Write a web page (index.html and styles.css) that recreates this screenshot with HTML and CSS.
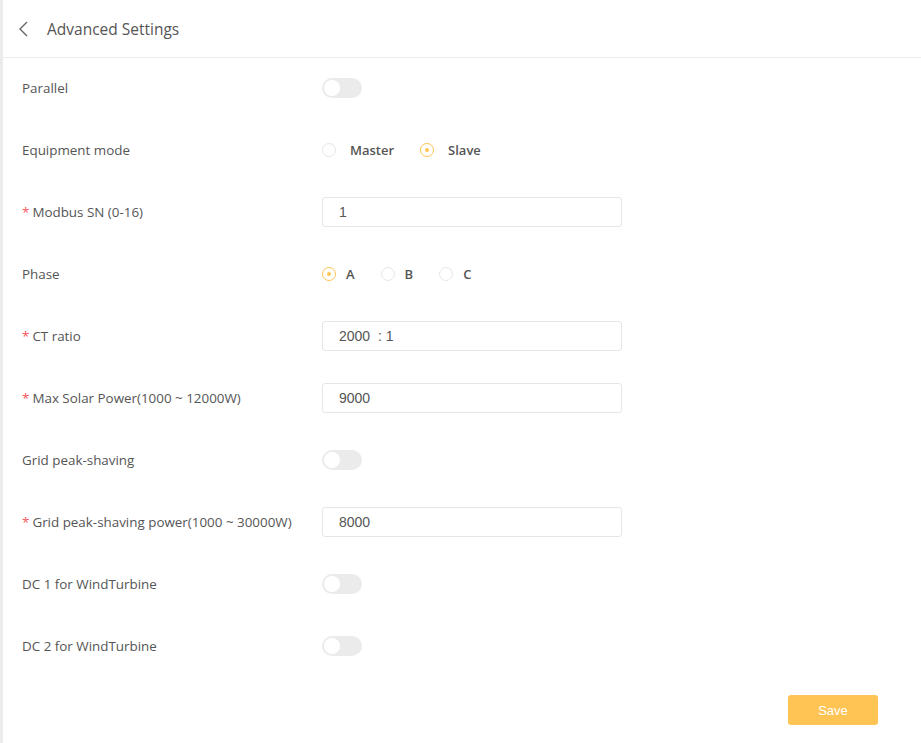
FILE: index.html
```html
<!DOCTYPE html>
<html lang="en">
<head>
    <meta charset="UTF-8">
    <meta name="viewport" content="width=device-width, initial-scale=1.0">
    <title>Advanced Settings</title>
    <link rel="stylesheet" href="styles.css">
</head>
<body>
    <div class="page">
        <div class="header">
            <svg class="back" width="12" height="16" viewBox="0 0 12 16">
                <path d="M9 1 L2 8 L9 15" fill="none" stroke="#666" stroke-width="1.4"/>
            </svg>
            <span class="title">Advanced Settings</span>
        </div>

        <div class="form">
            <div class="row">
                <label>Parallel</label>
                <span class="switch"></span>
            </div>
            <div class="row">
                <label>Equipment mode</label>
                <div class="radios">
                    <span class="radio"><i></i>Master</span>
                    <span class="radio checked"><i></i>Slave</span>
                </div>
            </div>
            <div class="row">
                <label><em>*</em>Modbus SN (0-16)</label>
                <div class="input">1</div>
            </div>
            <div class="row">
                <label>Phase</label>
                <div class="radios small">
                    <span class="radio checked"><i></i>A</span>
                    <span class="radio"><i></i>B</span>
                    <span class="radio"><i></i>C</span>
                </div>
            </div>
            <div class="row">
                <label><em>*</em>CT ratio</label>
                <div class="input">2000 &nbsp;: 1</div>
            </div>
            <div class="row">
                <label><em>*</em>Max Solar Power(1000 ~ 12000W)</label>
                <div class="input">9000</div>
            </div>
            <div class="row">
                <label>Grid peak-shaving</label>
                <span class="switch"></span>
            </div>
            <div class="row">
                <label><em>*</em>Grid peak-shaving power(1000 ~ 30000W)</label>
                <div class="input">8000</div>
            </div>
            <div class="row">
                <label>DC 1 for WindTurbine</label>
                <span class="switch"></span>
            </div>
            <div class="row">
                <label>DC 2 for WindTurbine</label>
                <span class="switch"></span>
            </div>
        </div>

        <div class="footer">
            <button class="save">Save</button>
        </div>
    </div>
</body>
</html>
```

FILE: styles.css
```css
body {
    margin: 0;
    font-family: "Open Sans", "Noto Sans", sans-serif;
    color: #555;
    background-color: white;
}
.page {
    border-left: 3px solid #ebebeb;
    min-height: 743px;
    box-sizing: border-box;
}
.header {
    height: 57px;
    border-bottom: 1px solid #ebebeb;
    display: flex;
    align-items: center;
    padding-left: 15px;
}
.back {
    margin-right: 17px;
}
.title {
    font-size: 15.5px;
    color: #555;
}
.form {
    padding: 15px 0 0 19px;
}
.row {
    display: flex;
    align-items: center;
    height: 30px;
    margin-bottom: 32px;
}
.row label {
    width: 300px;
    font-size: 13.4px;
    color: #555;
}
.row label em {
    font-style: normal;
    color: #f5555a;
    margin-right: 3px;
}
.switch {
    width: 40px;
    height: 20px;
    border-radius: 10px;
    background-color: #ebebeb;
    position: relative;
}
.switch::after {
    content: "";
    position: absolute;
    left: 2px;
    top: 2px;
    width: 16px;
    height: 16px;
    border-radius: 50%;
    background-color: white;
}
.radios {
    display: flex;
    gap: 26px;
}
.radios.small {
    gap: 26px;
}
.radio {
    display: flex;
    align-items: center;
    font-size: 13px;
    font-weight: 600;
    color: #555;
}
.radio i {
    width: 12px;
    height: 12px;
    border: 1px solid #e6e6e6;
    border-radius: 50%;
    margin-right: 14px;
    box-sizing: content-box;
    position: relative;
}
.radios.small .radio i {
    margin-right: 10px;
}
.radio.checked i {
    border-color: #ffc454;
}
.radio.checked i::after {
    content: "";
    position: absolute;
    left: 4px;
    top: 4px;
    width: 4px;
    height: 4px;
    border-radius: 50%;
    background-color: #ffc454;
}
.input {
    width: 300px;
    height: 30px;
    box-sizing: border-box;
    border: 1px solid #e6e6e6;
    border-radius: 3px;
    padding: 0 16px;
    display: flex;
    align-items: center;
    font-family: "Liberation Sans", Arial, sans-serif;
    font-size: 14px;
    color: #555;
}
.footer {
    display: flex;
    justify-content: flex-end;
    padding: 2px 43px 0 0;
}
.save {
    width: 90px;
    height: 30px;
    border: none;
    border-radius: 3px;
    background-color: #ffc454;
    color: white;
    font-family: "Liberation Sans", Arial, sans-serif;
    font-size: 13px;
}
```
